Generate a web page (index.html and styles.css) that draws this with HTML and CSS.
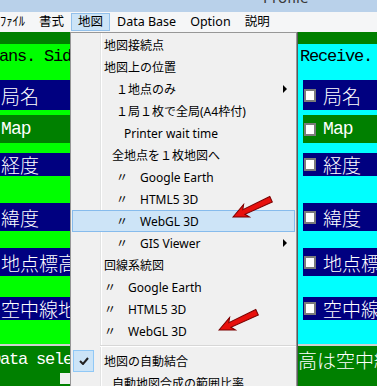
FILE: index.html
```html
<!DOCTYPE html>
<html lang="ja">
<head>
  <meta charset="UTF-8">
  <title>Profile</title>
  <link rel="stylesheet" href="styles.css">
</head>
<body>
  <div class="window">
    <div class="titlebar"><span class="title">Profile</span></div>

    <div class="menubar">
      <span>ﾌｧｲﾙ</span>
      <span>書式</span>
      <span class="open">地図</span>
      <span>Data Base</span>
      <span>Option</span>
      <span>説明</span>
    </div>

    <div class="work">
      <!-- 送信側 -->
      <div class="pane trans">
        <div class="band"></div>
        <div class="head">ans. Side</div>
        <div class="row r1 navy">局名</div>
        <div class="row r2 dgreen"><span class="latin">Map</span></div>
        <div class="row r3 navy">経度</div>
        <div class="row r4 navy">緯度</div>
        <div class="row r5 navy">地点標高</div>
        <div class="row r6 navy">空中線地上高</div>
        <div class="foot">Data selection<span class="stub"></span></div>
      </div>

      <!-- 受信側 -->
      <div class="pane recv">
        <div class="band"></div>
        <div class="head">Receive. Side</div>
        <div class="row r1 navy"><span class="chk"></span>局名</div>
        <div class="row r2 dgreen"><span class="chk"></span><span class="latin">Map</span></div>
        <div class="row r3 navy"><span class="chk"></span>経度</div>
        <div class="row r4 navy"><span class="chk"></span>緯度</div>
        <div class="row r5 navy"><span class="chk"></span>地点標高</div>
        <div class="row r6 navy"><span class="chk"></span>空中線地上高</div>
        <div class="foot">高は空中線</div>
      </div>
    </div>

    <!-- 地図メニュー -->
    <div class="menu">
      <div class="it">地図接続点</div>
      <div class="it">地図上の位置</div>
      <div class="it">　１地点のみ<span class="sub"></span></div>
      <div class="it">　１局１枚で全局(A4枠付)</div>
      <div class="it in2">Printer wait time</div>
      <div class="it in1">全地点を１枚地図へ</div>
      <div class="it">　〃　Google Earth</div>
      <div class="it">　〃　HTML5 3D</div>
      <div class="it hot">　〃　WebGL 3D</div>
      <div class="it">　〃　GIS Viewer<span class="sub"></span></div>
      <div class="it">回線系統図</div>
      <div class="it">〃　Google Earth</div>
      <div class="it">〃　HTML5 3D</div>
      <div class="it">〃　WebGL 3D</div>
      <div class="sep"></div>
      <div class="it checked">
        <span class="tick">
          <svg width="10" height="8" viewBox="0 0 10 8"><path d="M1 4 L4 7 L9 1" fill="none" stroke="#222" stroke-width="2"/></svg>
        </span>地図の自動結合
      </div>
      <div class="it in1">自動地図合成の範囲比率</div>
    </div>

    <svg class="arrows" width="377" height="386" viewBox="0 0 377 386">
      <polygon transform="translate(233 217) rotate(-25)" points="0,0 15,-7 12,-2.5 42,-3 42,3 12,2.5 15,7" fill="#e8100c" stroke="#7a0000" stroke-width="1"/>
      <polygon transform="translate(219 330) rotate(-25)" points="0,0 15,-7 12,-2.5 42,-3 42,3 12,2.5 15,7" fill="#e8100c" stroke="#7a0000" stroke-width="1"/>
    </svg>
  </div>
</body>
</html>
```

FILE: styles.css
```css
*{box-sizing: border-box;}
body{
  margin: 0;
  width: 377px;
  height: 386px;
  overflow: hidden;
  background-color: #f0f0f0;
  font-family: "Noto Sans", "Noto Sans CJK JP", sans-serif;
}
.window{position: relative; height: 386px;}

/* タイトルバー(上が切れている) */
.titlebar{
  height: 12px;
  overflow: hidden;
  background-color: #b9d1ea;
  padding-left: 263px;
}
.titlebar .title{
  display: block;
  margin-top: -10px;
  font-size: 15px;
  line-height: 15px;
  color: #3a3a3a;
}

/* メニューバー */
.menubar{
  display: flex;
  align-items: center;
  height: 20px;
  background-color: #f5f6f7;
  font-size: 12.5px;
}
.menubar span{
  height: 18px;
  line-height: 16px;
  padding: 0 6px;
  border: 1px solid transparent;
  white-space: nowrap;
}
.menubar span:first-child{margin-left: -7px;}
.menubar .open{
  background-color: #cce4f7;
  border-color: #92c0ea;
}

/* 後ろのウィンドウ */
.work{display: flex; height: 354px;}
.pane{overflow: hidden;}
.trans{flex: 0 0 297px; background-color: #00ff00;}
.recv{flex: 1; background-color: #00ffff; border-left: 1px solid #5a5a5a;}

.band{height: 12px; background-color: #008000;}
.head, .latin, .foot{
  font-family: "Liberation Mono", monospace;
  font-size: 17px;
  letter-spacing: -1.2px;
}
.head{
  height: 36px;
  padding-top: 3px;
  line-height: 20px;
  color: #000;
  white-space: nowrap;
}
.trans .head{text-indent: -1px;}
.recv .head{padding-left: 2px;}

.row{
  display: flex;
  align-items: center;
  color: #fff;
  font-family: "Noto Sans CJK JP", sans-serif;
  font-weight: 300;
  font-size: 19px;
  white-space: nowrap;
}
.row .latin{font-size: 18px; letter-spacing: -0.9px;}
.navy{background-color: #000080;}
.dgreen{background-color: #008000;}
.trans .row{padding-left: 1px;}
.recv .row{margin-left: 5px;}
.r1{height: 30px;}
.r2{margin-top: 5px; height: 28px;}
.r3{margin-top: 10px; height: 23px;}
.r4{margin-top: 27px; height: 28px;}
.r5{margin-top: 17px; height: 28px;}
.r6{margin-top: 21px; height: 23px;}

.chk{
  flex: none;
  width: 12px;
  height: 13px;
  margin: 0 7px 0 1px;
  border: 2px solid #7b7b7b;
  background-color: #fff;
}

.foot{
  margin-top: 24px;
  height: 42px;
  padding-top: 4px;
  border-top: 2px solid #d0d0d0;
  background-color: #008000;
  color: #fff;
  line-height: 20px;
  white-space: nowrap;
}
.trans .foot{text-indent: -9px;}
.recv .foot{
  font-family: "Noto Sans CJK JP", sans-serif;
  font-weight: 300;
  font-size: 19px;
  letter-spacing: 0;
}
.foot .stub{
  display: block;
  width: 10px;
  height: 11px;
  margin: 3px 0 0 60px;
  background-color: #f0f0f0;
}

/* ドロップダウンメニュー */
.menu{
  position: absolute;
  left: 70px;
  top: 32px;
  width: 227px;
  height: 360px;
  padding-top: 1px;
  border: 1px solid #979797;
  border-bottom: none;
  background: linear-gradient(to right, transparent 29px, #e2e3e3 29px, #e2e3e3 30px, #fff 30px, #fff 31px, transparent 31px), #f0f0f0;
  font-size: 12px;
  color: #000;
}
.menu .it{
  display: flex;
  align-items: center;
  height: 22px;
  padding-left: 33px;
  white-space: nowrap;
}
.menu .in1{padding-left: 41px;}
.menu .in2{padding-left: 53px;}
.menu .hot{
  margin: 0 1px;
  padding-left: 31px;
  background-color: #cde4f7;
  border: 1px solid #86bbec;
}
.menu .sub{
  margin-left: auto;
  margin-right: 9px;
  width: 0;
  height: 0;
  border-left: 4px solid #000;
  border-top: 4px solid transparent;
  border-bottom: 4px solid transparent;
}
.menu .sep{
  margin: 3px 0 3px 29px;
  border-top: 1px solid #d7d7d7;
  border-bottom: 1px solid #fff;
}
.menu .checked{padding-left: 2px;}
.menu .tick{
  flex: none;
  display: flex;
  align-items: center;
  justify-content: center;
  width: 21px;
  height: 22px;
  margin-right: 10px;
  background-color: #cce4f7;
  border: 1px solid #90c8f6;
}

/* 赤い矢印 */
.arrows{
  position: absolute;
  left: 0;
  top: 0;
  pointer-events: none;
}
```
